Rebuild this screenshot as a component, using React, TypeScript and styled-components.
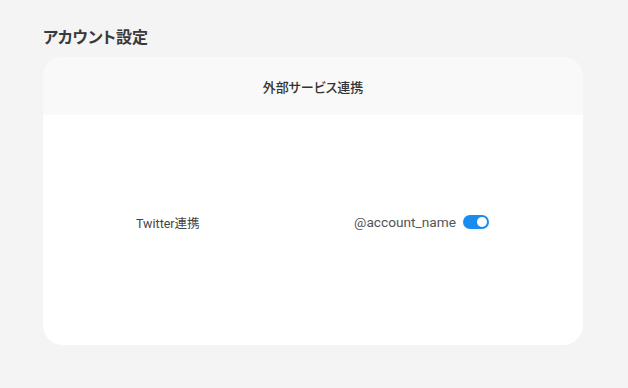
import React from "react";
import styled, { createGlobalStyle } from "styled-components";

const Global = createGlobalStyle`
  html, body { margin: 0; padding: 0; background: #f4f4f4; }
  body {
    font-family: "Segoe UI", Roboto, "Noto Sans CJK JP", sans-serif;
    font-feature-settings: "palt";
    color: #333;
  }
`;

const Page = styled.div`
  padding: 26px 45px 0 43px;
  width: 540px;
`;

const Title = styled.h1`
  margin: 0 0 7px 0;
  font-size: 16px;
  font-weight: 700;
  line-height: 24px;
  color: #3a3a3a;
`;

const Card = styled.section`
  background: #fff;
  border-radius: 20px;
  overflow: hidden;
  height: 288px;
  display: flex;
  flex-direction: column;
`;

const CardHeader = styled.header`
  height: 58px;
  background: #f9f9f9;
  display: flex;
  align-items: center;
  justify-content: center;
  font-size: 13px;
  font-weight: 500;
  color: #333;
`;

const CardBody = styled.div`
  flex: 1;
  display: flex;
  align-items: center;
  justify-content: space-between;
  padding: 0 94px 16px 93px;
`;

const Label = styled.span`
  font-size: 12.5px;
  color: #444;
`;

const Account = styled.div`
  display: flex;
  align-items: center;
  gap: 7px;
  font-size: 13.7px;
  color: #555;
`;

const Toggle = styled.span<{ $on: boolean }>`
  position: relative;
  width: 26px;
  height: 14px;
  border-radius: 7px;
  background: ${(p) => (p.$on ? "#1a8cf0" : "#ccc")};
  &::after {
    content: "";
    position: absolute;
    top: 2px;
    left: ${(p) => (p.$on ? "14px" : "2px")};
    width: 10px;
    height: 10px;
    border-radius: 50%;
    background: #fff;
  }
`;

export default function App() {
  return (
    <>
      <Global />
      <Page>
        <Title>アカウント設定</Title>
        <Card>
          <CardHeader>外部サービス連携</CardHeader>
          <CardBody>
            <Label>Twitter連携</Label>
            <Account>
              @account_name
              <Toggle $on />
            </Account>
          </CardBody>
        </Card>
      </Page>
    </>
  );
}
